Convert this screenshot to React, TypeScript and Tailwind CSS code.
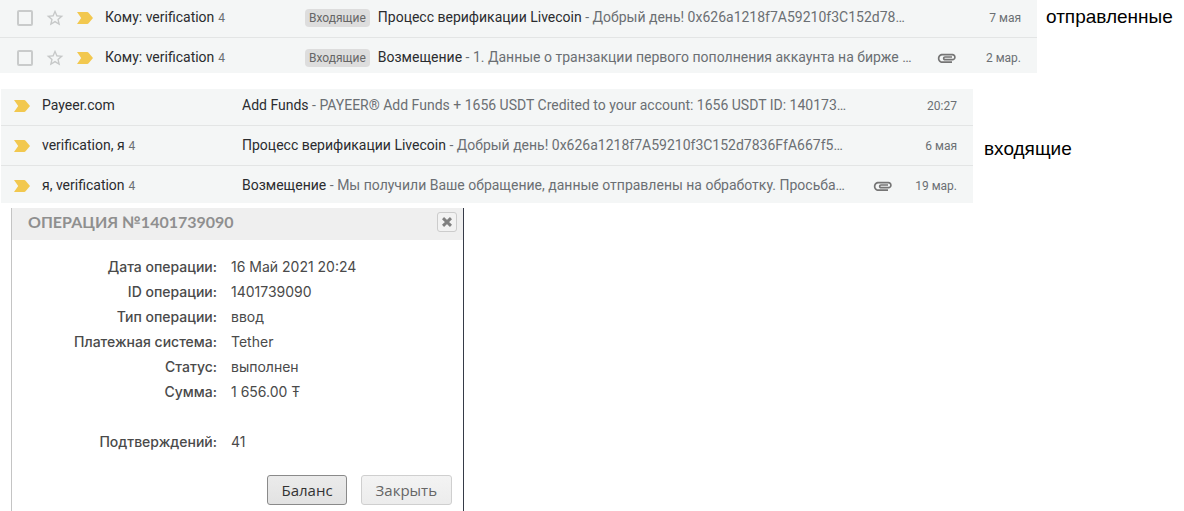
import React from "react";

type Mail = {
  id: string;
  sender: string;
  count?: number;
  label?: string;
  subject: string;
  snippet: string;
  attachment?: boolean;
  date: string;
};

const sent: Mail[] = [
  {
    id: "sent-1",
    sender: "Кому: verification",
    count: 4,
    label: "Входящие",
    subject: "Процесс верификации Livecoin",
    snippet: "Добрый день! 0x626a1218f7A59210f3C152d78…",
    date: "7 мая",
  },
  {
    id: "sent-2",
    sender: "Кому: verification",
    count: 4,
    label: "Входящие",
    subject: "Возмещение",
    snippet: "1. Данные о транзакции первого пополнения аккаунта на бирже …",
    attachment: true,
    date: "2 мар.",
  },
];

const inbox: Mail[] = [
  {
    id: "inbox-1",
    sender: "Payeer.com",
    subject: "Add Funds",
    snippet: "PAYEER® Add Funds + 1656 USDT Credited to your account: 1656 USDT ID: 140173…",
    date: "20:27",
  },
  {
    id: "inbox-2",
    sender: "verification, я",
    count: 4,
    subject: "Процесс верификации Livecoin",
    snippet: "Добрый день! 0x626a1218f7A59210f3C152d7836FfA667f5…",
    date: "6 мая",
  },
  {
    id: "inbox-3",
    sender: "я, verification",
    count: 4,
    subject: "Возмещение",
    snippet: "Мы получили Ваше обращение, данные отправлены на обработку. Просьба…",
    attachment: true,
    date: "19 мар.",
  },
];

const details: [string, string][] = [
  ["Дата операции:", "16 Май 2021 20:24"],
  ["ID операции:", "1401739090"],
  ["Тип операции:", "ввод"],
  ["Платежная система:", "Tether"],
  ["Статус:", "выполнен"],
  ["Сумма:", "1 656.00 Ŧ"],
];

function ImportanceIcon() {
  return (
    <svg className="h-3 w-4 shrink-0" viewBox="0 0 16 12" aria-hidden="true">
      <path d="M0 0h10.2c.6 0 1 .2 1.4.7L16 6l-4.4 5.3c-.4.5-.8.7-1.4.7H0l4.2-6z" fill="#f2c84f" />
    </svg>
  );
}

function StarIcon() {
  return (
    <svg className="size-5" viewBox="0 0 24 24" fill="#c6c8c8" aria-hidden="true">
      <path d="M22 9.24l-7.19-.62L12 2 9.19 8.63 2 9.24l5.46 4.73L5.82 21 12 17.27 18.18 21l-1.63-7.03L22 9.24zM12 15.4l-3.76 2.27 1-4.28-3.32-2.88 4.38-.38L12 6.1l1.71 4.04 4.38.38-3.32 2.88 1 4.28L12 15.4z" />
    </svg>
  );
}

function ClipIcon() {
  return (
    <svg className="size-5 shrink-0" viewBox="0 0 24 24" fill="#757575" role="img" aria-label="Вложение">
      <path d="M1 12.5C1 9.46 3.46 7 6.5 7H18.500c2.210 0 4 1.790 4 4s-1.790 4-4 4H9.500C8.120 15 7 13.880 7 12.500S8.120 10 9.500 10H18v1.800H9.410c-.55 0-.55 1.200 0 1.200H18.500c1.100 0 2-.9 2-2s-.9-2-2-2H6.500C4.570 9 3 10.570 3 12.500S4.570 16 6.500 16H18v2H6.500C3.460 18 1 15.540 1 12.500z" />
    </svg>
  );
}

function MailRow({ mail, selectable }: { mail: Mail; selectable?: boolean }) {
  return (
    <li className="flex h-10 items-center border-b border-[#e3e5e5] pr-4 text-sm whitespace-nowrap last:border-transparent">
      {selectable && (
        <div className="flex items-center gap-3 pr-3 pl-[17px]">
          <input
            type="checkbox"
            aria-label={mail.subject}
            className="size-4 appearance-none rounded-[2px] border-2 border-[#c9cbcb] checked:bg-[#757575]"
          />
          <button type="button" aria-label="Пометить">
            <StarIcon />
          </button>
        </div>
      )}
      <div className={selectable ? "flex w-[228px] items-center gap-3" : "flex w-[241px] items-center gap-3 pl-[13px]"}>
        <ImportanceIcon />
        <span className="pb-0.5 text-[#2b2c2f]">
          {mail.sender}
          {mail.count && <span className="ml-1 text-xs text-[#6b6f73]">{mail.count}</span>}
        </span>
      </div>
      {mail.label && (
        <span className="mr-2 rounded bg-[#dddddd] px-1 text-xs leading-[18px] text-[#666666]">{mail.label}</span>
      )}
      <a href={"#" + mail.id} className="min-w-0 flex-1 overflow-hidden pb-0.5 text-[#6b6f73]">
        <span className="text-[#2b2c2f]">{mail.subject}</span> - {mail.snippet}
      </a>
      {mail.attachment && <ClipIcon />}
      <time className="w-16 text-right text-xs text-[#6b6f73]">{mail.date}</time>
    </li>
  );
}

export default function App() {
  return (
    <main className="overflow-hidden bg-white font-[Roboto,sans-serif]">
      <section className="flex items-start">
        <div className="min-w-0 flex-1 overflow-hidden bg-[#f4f6f6]">
          <ul className="-mt-[2px] -mb-[5px]">
            {sent.map((m) => (
              <MailRow key={m.id} mail={m} selectable />
            ))}
          </ul>
        </div>
        <h2 className="w-[147px] pt-[5px] pl-[9px] font-['Liberation_Sans',Arial,sans-serif] text-[19px] leading-6 text-black">
          отправленные
        </h2>
      </section>

      <section className="mt-4 flex items-center pl-px">
        <div className="min-w-0 flex-1 overflow-hidden bg-[#f4f6f6]">
          <ul className="-my-[3px]">
            {inbox.map((m) => (
              <MailRow key={m.id} mail={m} />
            ))}
          </ul>
        </div>
        <h2 className="w-[211px] pt-[5px] pl-[11px] font-['Liberation_Sans',Arial,sans-serif] text-[19px] leading-6 text-black">
          входящие
        </h2>
      </section>

      <section
        aria-labelledby="operation-title"
        className="mt-[5px] ml-[11px] w-full max-w-[453px] border-r border-l border-r-[#363b48] border-l-[#c4c4c4]"
      >
        <header className="flex h-8 items-start justify-between bg-[#efefef] pr-1.5 pl-4">
          <h2 id="operation-title" className="pt-0.5 font-[Lato,sans-serif] text-base font-bold text-[#8f8f8f]">
            ОПЕРАЦИЯ №1401739090
          </h2>
          <button
            type="button"
            aria-label="Закрыть окно"
            className="mt-1 flex size-5 items-center justify-center rounded-[3px] border border-[#cccccc] bg-[#f2f2f2]"
          >
            <svg className="size-[10px]" viewBox="0 0 10 10" stroke="#808080" strokeWidth="3" aria-hidden="true">
              <path d="M1 1.200l8 7.600M9 1.200l-8 7.600" />
            </svg>
          </button>
        </header>

        <div className="pt-[14px] font-[Inter,sans-serif] text-sm leading-[25px] text-[#4a4a4a]">
          <dl>
            {details.map(([term, value]) => (
              <div key={term} className="flex gap-[14px]">
                <dt className="w-[205px] text-right font-medium">{term}</dt>
                <dd>{value}</dd>
              </div>
            ))}
            <div className="mt-[25px] flex gap-[14px]">
              <dt className="w-[205px] text-right font-medium">Подтверждений:</dt>
              <dd>41</dd>
            </div>
          </dl>
        </div>

        <footer className="flex justify-end gap-[14px] pt-[21px] pr-[11px] pb-1.5 font-['Open_Sans',sans-serif] text-[15px]">
          <button
            type="button"
            className="h-[30px] rounded-[3px] border border-[#8a8a8a] bg-linear-to-b from-[#ebebeb] to-[#e2e2e2] px-[13px] text-[#333333]"
          >
            Баланс
          </button>
          <button
            type="button"
            className="h-[30px] rounded-[3px] border border-[#cfcfcf] bg-linear-to-b from-[#f3f3f3] to-[#ececec] px-[14px] text-[#666666]"
          >
            Закрыть
          </button>
        </footer>
      </section>
    </main>
  );
}
